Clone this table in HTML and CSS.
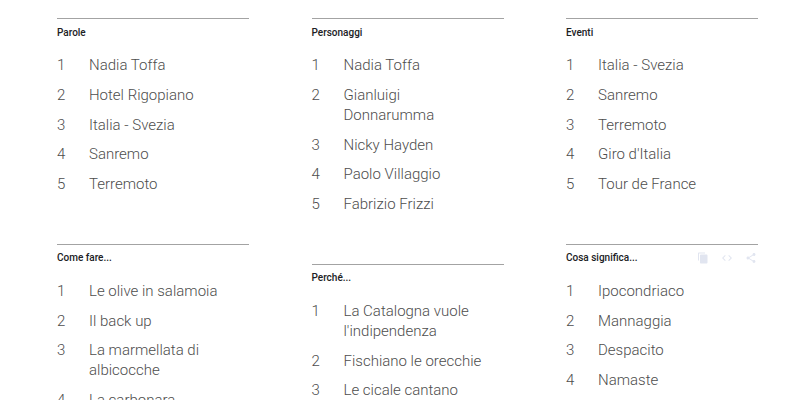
FILE: index.html
```html
<!DOCTYPE html>
<html lang="it">
<head>
<meta charset="utf-8">
<title>Anno nella ricerca</title>
<link rel="stylesheet" href="styles.css">
</head>
<body>
<div class="grid">
  <div class="col">
    <section class="card">
      <header class="card-head"><h3 class="card-title">Parole</h3></header>
      <ol class="list">
        <li class="row"><span class="num">1</span><span class="txt">Nadia Toffa</span></li>
        <li class="row"><span class="num">2</span><span class="txt">Hotel Rigopiano</span></li>
        <li class="row"><span class="num">3</span><span class="txt">Italia - Svezia</span></li>
        <li class="row"><span class="num">4</span><span class="txt">Sanremo</span></li>
        <li class="row"><span class="num">5</span><span class="txt">Terremoto</span></li>
      </ol>
    </section>
    <section class="card">
      <header class="card-head"><h3 class="card-title">Come fare...</h3></header>
      <ol class="list">
        <li class="row"><span class="num">1</span><span class="txt">Le olive in salamoia</span></li>
        <li class="row"><span class="num">2</span><span class="txt">Il back up</span></li>
        <li class="row"><span class="num">3</span><span class="txt">La marmellata di albicocche</span></li>
        <li class="row"><span class="num">4</span><span class="txt">La carbonara</span></li>
        <li class="row"><span class="num">5</span><span class="txt">Il pane</span></li>
      </ol>
    </section>
  </div>
  <div class="col">
    <section class="card">
      <header class="card-head"><h3 class="card-title">Personaggi</h3></header>
      <ol class="list">
        <li class="row"><span class="num">1</span><span class="txt">Nadia Toffa</span></li>
        <li class="row"><span class="num">2</span><span class="txt">Gianluigi Donnarumma</span></li>
        <li class="row"><span class="num">3</span><span class="txt">Nicky Hayden</span></li>
        <li class="row"><span class="num">4</span><span class="txt">Paolo Villaggio</span></li>
        <li class="row"><span class="num">5</span><span class="txt">Fabrizio Frizzi</span></li>
      </ol>
    </section>
    <section class="card">
      <header class="card-head"><h3 class="card-title">Perché...</h3></header>
      <ol class="list">
        <li class="row"><span class="num">1</span><span class="txt">La Catalogna vuole l'indipendenza</span></li>
        <li class="row"><span class="num">2</span><span class="txt">Fischiano le orecchie</span></li>
        <li class="row"><span class="num">3</span><span class="txt">Le cicale cantano</span></li>
        <li class="row"><span class="num">4</span><span class="txt">Si festeggia Halloween</span></li>
        <li class="row"><span class="num">5</span><span class="txt">Si sbadiglia</span></li>
      </ol>
    </section>
  </div>
  <div class="col">
    <section class="card">
      <header class="card-head"><h3 class="card-title">Eventi</h3></header>
      <ol class="list">
        <li class="row"><span class="num">1</span><span class="txt">Italia - Svezia</span></li>
        <li class="row"><span class="num">2</span><span class="txt">Sanremo</span></li>
        <li class="row"><span class="num">3</span><span class="txt">Terremoto</span></li>
        <li class="row"><span class="num">4</span><span class="txt">Giro d'Italia</span></li>
        <li class="row"><span class="num">5</span><span class="txt">Tour de France</span></li>
      </ol>
    </section>
    <section class="card">
      <header class="card-head">
        <h3 class="card-title">Cosa significa...</h3>
        <div class="actions">
          <svg class="icon" viewBox="0 0 24 24"><path d="M16 1H4c-1.1 0-2 .9-2 2v14h2V3h12V1zm3 4H8c-1.1 0-2 .9-2 2v14c0 1.1.9 2 2 2h11c1.1 0 2-.9 2-2V7c0-1.1-.9-2-2-2z"/></svg>
          <svg class="icon" viewBox="0 0 24 24"><path d="M9.4 16.6L4.8 12l4.6-4.6L8 6l-6 6 6 6 1.4-1.4zm5.2 0l4.6-4.6-4.6-4.6L16 6l6 6-6 6-1.4-1.4z"/></svg>
          <svg class="icon" viewBox="0 0 24 24"><path d="M18 16.08c-.76 0-1.44.3-1.96.77L8.91 12.7c.05-.23.09-.46.09-.7s-.04-.47-.09-.7l7.05-4.11c.54.5 1.25.81 2.04.81 1.66 0 3-1.34 3-3s-1.34-3-3-3-3 1.34-3 3c0 .24.04.47.09.7L8.04 9.81C7.5 9.31 6.79 9 6 9c-1.66 0-3 1.34-3 3s1.34 3 3 3c.79 0 1.5-.31 2.04-.81l7.12 4.16c-.05.21-.08.43-.08.65 0 1.61 1.31 2.92 2.92 2.92 1.61 0 2.92-1.31 2.92-2.92s-1.310-2.92-2.92-2.92z"/></svg>
        </div>
      </header>
      <ol class="list">
        <li class="row"><span class="num">1</span><span class="txt">Ipocondriaco</span></li>
        <li class="row"><span class="num">2</span><span class="txt">Mannaggia</span></li>
        <li class="row"><span class="num">3</span><span class="txt">Despacito</span></li>
        <li class="row"><span class="num">4</span><span class="txt">Namaste</span></li>
        <li class="row"><span class="num">5</span><span class="txt">Bae</span></li>
      </ol>
    </section>
  </div>
</div>
</body>
</html>
```

FILE: styles.css
```css
* { box-sizing: border-box; }
html, body {
  margin: 0;
  padding: 0;
  background: #fff;
  overflow: hidden;
  height: 400px;
}
body {
  font-family: Roboto, "Noto Sans", Arial, sans-serif;
}
.grid {
  display: grid;
  grid-template-columns: repeat(3, 192px);
  column-gap: 62.5px;
  padding: 18px 0 0 57px;
}
.col {
  display: flex;
  flex-direction: column;
  gap: 40px;
}
.card {
  border-top: 1px solid #a3a3a3;
}
.card-head {
  display: flex;
  align-items: center;
  justify-content: space-between;
  padding-top: 6px;
  height: 21px;
}
.card-title {
  margin: 0;
  font-size: 10px;
  line-height: 14px;
  font-weight: 500;
  color: #202124;
}
.actions {
  display: flex;
  align-items: center;
  gap: 12px;
  padding-right: 1px;
}
.icon {
  width: 12px;
  height: 12px;
  fill: #e1e5f0;
}
.list {
  list-style: none;
  margin: 0;
  padding: 15px 0 0 0;
}
.row {
  display: flex;
  font-size: 15px;
  line-height: 20px;
  font-weight: 300;
  color: #4d4d4d;
  padding-bottom: 9.75px;
}
.num {
  flex: 0 0 32px;
}
.txt {
  flex: 1;
  padding-right: 16px;
}
```
